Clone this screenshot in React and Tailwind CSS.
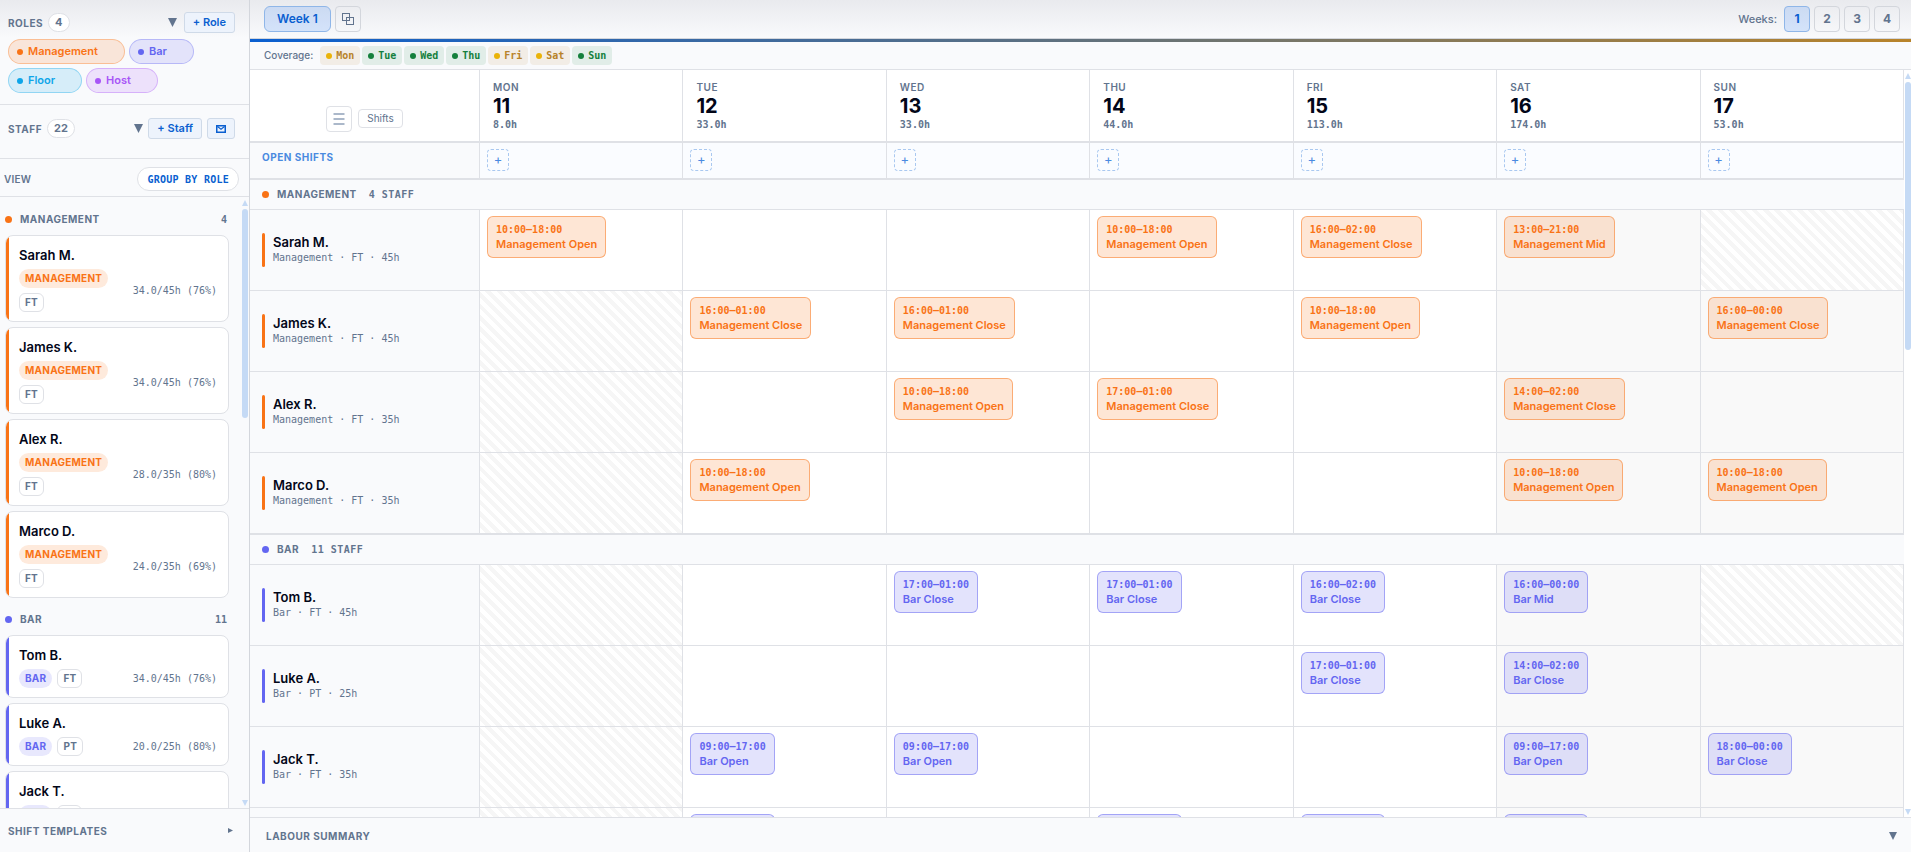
import React from 'react';
import clsx from 'clsx';

const TONES = {
  management: {
    dot: 'bg-[#f97316]',
    text: 'text-[#f97316]',
    chip: 'bg-[#f97316]/15 border-[#f97316]/35',
    badge: 'bg-[#f97316]/15',
    shift: 'bg-[#f97316]/18 border-[#f97316]/50',
  },
  bar: {
    dot: 'bg-[#6366f1]',
    text: 'text-[#6366f1]',
    chip: 'bg-[#6366f1]/15 border-[#6366f1]/35',
    badge: 'bg-[#6366f1]/15',
    shift: 'bg-[#6366f1]/18 border-[#6366f1]/50',
  },
  floor: {
    dot: 'bg-[#0ea5e9]',
    text: 'text-[#0ea5e9]',
    chip: 'bg-[#0ea5e9]/15 border-[#0ea5e9]/35',
  },
  host: {
    dot: 'bg-[#a855f7]',
    text: 'text-[#a855f7]',
    chip: 'bg-[#a855f7]/15 border-[#a855f7]/35',
  },
};

const ROLES = [
  { id: 'management', label: 'Management' },
  { id: 'bar', label: 'Bar' },
  { id: 'floor', label: 'Floor' },
  { id: 'host', label: 'Host' },
];

const DAYS = [
  { key: 'Mon', date: 11, hours: '8.0h', coverage: 'low' },
  { key: 'Tue', date: 12, hours: '33.0h', coverage: 'ok' },
  { key: 'Wed', date: 13, hours: '33.0h', coverage: 'ok' },
  { key: 'Thu', date: 14, hours: '44.0h', coverage: 'ok' },
  { key: 'Fri', date: 15, hours: '113.0h', coverage: 'low' },
  { key: 'Sat', date: 16, hours: '174.0h', coverage: 'low', weekend: true },
  { key: 'Sun', date: 17, hours: '53.0h', coverage: 'ok', weekend: true },
];

const GROUPS = [
  {
    role: 'management',
    label: 'Management',
    count: 4,
    staff: [
      {
        name: 'Sarah M.', type: 'FT', contract: 45, used: '34.0/45h (76%)', off: ['Sun'],
        shifts: {
          Mon: ['10:00–18:00', 'Management Open'],
          Thu: ['10:00–18:00', 'Management Open'],
          Fri: ['16:00–02:00', 'Management Close'],
          Sat: ['13:00–21:00', 'Management Mid'],
        },
      },
      {
        name: 'James K.', type: 'FT', contract: 45, used: '34.0/45h (76%)', off: ['Mon'],
        shifts: {
          Tue: ['16:00–01:00', 'Management Close'],
          Wed: ['16:00–01:00', 'Management Close'],
          Fri: ['10:00–18:00', 'Management Open'],
          Sun: ['16:00–00:00', 'Management Close'],
        },
      },
      {
        name: 'Alex R.', type: 'FT', contract: 35, used: '28.0/35h (80%)', off: ['Mon'],
        shifts: {
          Wed: ['10:00–18:00', 'Management Open'],
          Thu: ['17:00–01:00', 'Management Close'],
          Sat: ['14:00–02:00', 'Management Close'],
        },
      },
      {
        name: 'Marco D.', type: 'FT', contract: 35, used: '24.0/35h (69%)', off: ['Mon'],
        shifts: {
          Tue: ['10:00–18:00', 'Management Open'],
          Sat: ['10:00–18:00', 'Management Open'],
          Sun: ['10:00–18:00', 'Management Open'],
        },
      },
    ],
  },
  {
    role: 'bar',
    label: 'Bar',
    count: 11,
    staff: [
      {
        name: 'Tom B.', type: 'FT', contract: 45, used: '34.0/45h (76%)', off: ['Mon', 'Sun'],
        shifts: {
          Wed: ['17:00–01:00', 'Bar Close'],
          Thu: ['17:00–01:00', 'Bar Close'],
          Fri: ['16:00–02:00', 'Bar Close'],
          Sat: ['16:00–00:00', 'Bar Mid'],
        },
      },
      {
        name: 'Luke A.', type: 'PT', contract: 25, used: '20.0/25h (80%)', off: ['Mon'],
        shifts: {
          Fri: ['17:00–01:00', 'Bar Close'],
          Sat: ['14:00–02:00', 'Bar Close'],
        },
      },
      {
        name: 'Jack T.', type: 'FT', contract: 35, used: '32.0/35h (91%)', off: ['Mon'],
        shifts: {
          Tue: ['09:00–17:00', 'Bar Open'],
          Wed: ['09:00–17:00', 'Bar Open'],
          Sat: ['09:00–17:00', 'Bar Open'],
          Sun: ['18:00–00:00', 'Bar Close'],
        },
      },
      {
        name: 'Ryan P.', type: 'FT', contract: 35, used: '32.0/35h (91%)', off: ['Mon'],
        shifts: {
          Tue: ['17:00–01:00', 'Bar Close'],
          Thu: ['09:00–17:00', 'Bar Open'],
          Fri: ['09:00–17:00', 'Bar Open'],
          Sat: ['17:00–01:00', 'Bar Close'],
        },
      },
    ],
  },
];

const MONO = "font-['DejaVu_Sans_Mono',monospace]";
const LABEL = 'text-[10px] leading-4 font-bold uppercase tracking-wider text-slate-500';
const GRID = 'grid grid-cols-[230px_repeat(7,minmax(0,1fr))]';
const LINE = 'border-[#dfe1e6]';
const HATCH =
  'bg-[repeating-linear-gradient(45deg,transparent_0px,transparent_4px,rgba(0,0,0,0.035)_4px,rgba(0,0,0,0.035)_8px)]';

function Triangle({ className, dir = 'down' }) {
  const points = { down: '0,0 10,0 5,10', up: '0,10 10,10 5,0', right: '0,0 10,5 0,10' }[dir];
  return (
    <svg viewBox="0 0 10 10" className={className} fill="currentColor" aria-hidden="true">
      <polygon points={points} />
    </svg>
  );
}

function Count({ children }) {
  return (
    <span className="rounded-full border border-[#dfe1e6] bg-white px-[6px] text-[11px] leading-[17px] font-bold text-slate-500">
      {children}
    </span>
  );
}

function SmallButton({ children, ...props }) {
  return (
    <button
      type="button"
      className="flex h-[21px] items-center rounded-[3px] border border-[#cfdae8] bg-[#edf3fc] px-2 text-[11px] font-semibold text-[#0a5fd0]"
      {...props}
    >
      {children}
    </button>
  );
}

function Scrollbar({ className, thumb }) {
  return (
    <div className={clsx('flex shrink-0 flex-col items-center text-[#c5daf5]', className)} aria-hidden="true">
      <Triangle dir="up" className="my-[3px] size-[6px]" />
      <div className={clsx('w-[6px] rounded-full bg-[#c5daf5]', thumb)} />
      <Triangle dir="down" className="mt-auto mb-[2px] size-[6px]" />
    </div>
  );
}

function StaffCard({ person, group }) {
  const tone = TONES[group.role];
  return (
    <li className="flex overflow-hidden rounded-lg border border-[#dfe1e6] bg-white">
      <span className={clsx('w-[3px] shrink-0', tone.dot)} />
      <div className="flex-1 pt-[10px] pr-[11px] pb-[9px] pl-[10px]">
        <p className="text-[13px] leading-[18px] font-semibold text-slate-950">{person.name}</p>
        <div className="mt-[5px] flex items-center justify-between gap-2">
          <div className="flex flex-wrap gap-[5px]">
            <span className={clsx('rounded-full px-[6px] text-[10px] leading-[19px] font-bold uppercase tracking-wide', tone.badge, tone.text)}>
              {group.label}
            </span>
            <span className="rounded-md border border-[#dfe1e6] bg-white px-[5px] text-[10px] leading-[17px] font-bold tracking-wide text-slate-500">
              {person.type}
            </span>
          </div>
          <span className={clsx('shrink-0 text-[10px] text-slate-500', MONO)}>{person.used}</span>
        </div>
      </div>
    </li>
  );
}

function Sidebar() {
  return (
    <aside className="flex w-[250px] shrink-0 flex-col border-r border-[#d3d6dc]">
      <section className="border-b border-[#dfe1e6] px-2 pt-3 pb-[11px]">
        <div className="flex items-center gap-[5px] pr-[6px]">
          <h2 className={LABEL}>Roles</h2>
          <Count>4</Count>
          <Triangle className="mr-[2px] ml-auto size-[9px] text-slate-500" />
          <SmallButton>+ Role</SmallButton>
        </div>
        <ul className="mt-[6px] flex flex-wrap gap-1">
          {ROLES.map((role) => (
            <li
              key={role.id}
              className={clsx('flex h-[25px] items-center gap-[5px] rounded-full border pr-[26px] pl-2 text-[11px] font-semibold', TONES[role.id].chip, TONES[role.id].text)}
            >
              <span className={clsx('size-[6px] rounded-full', TONES[role.id].dot)} />
              {role.label}
            </li>
          ))}
        </ul>
      </section>

      <section className="flex items-center gap-[5px] border-b border-[#dfe1e6] pt-[13px] pr-[14px] pb-[19px] pl-2">
        <h2 className={LABEL}>Staff</h2>
        <Count>22</Count>
        <Triangle className="ml-auto size-[9px] text-slate-500" />
        <SmallButton>+ Staff</SmallButton>
        <SmallButton aria-label="Email staff">
          <svg viewBox="0 0 10 8" className="h-2 w-[10px]" fill="none" stroke="currentColor" strokeWidth="1.5">
            <rect x="0.75" y="0.75" width="8.5" height="6.5" />
            <path d="M1.5 1.5l3.5 2.8l3.5-2.8" strokeWidth="1.1" />
          </svg>
        </SmallButton>
      </section>

      <div className="flex items-center justify-between border-b border-[#dfe1e6] pt-2 pr-[10px] pb-[5px] pl-1">
        <span className="text-[10px] font-semibold tracking-wide text-slate-500 uppercase">View</span>
        <button
          type="button"
          className={clsx('h-6 rounded-full border border-[#dfe1e6] bg-white px-[9px] text-[10px] font-bold tracking-wide text-[#0a5fd0] uppercase', MONO)}
        >
          Group by role
        </button>
      </div>

      <div className="flex min-h-0 flex-1">
        <div className="flex-1 overflow-hidden pt-[6px] pl-[5px]">
          {GROUPS.map((group) => (
            <section key={group.role} className="pb-[5px]">
              <div className="flex h-8 items-center gap-2 pr-[2px]">
                <span className={clsx('size-[7px] rounded-full', TONES[group.role].dot)} />
                <h3 className={LABEL}>{group.label}</h3>
                <span className={clsx('ml-auto text-[10px] font-bold text-slate-500', MONO)}>{group.count}</span>
              </div>
              <ul className="flex flex-col gap-[5px]">
                {group.staff.map((person) => (
                  <StaffCard key={person.name} person={person} group={group} />
                ))}
              </ul>
            </section>
          ))}
        </div>
        <Scrollbar className="ml-3 w-2" thumb="h-[209px]" />
      </div>

      <button type="button" className="flex h-11 shrink-0 items-center justify-between border-t border-[#dfe1e6] px-2">
        <span className={LABEL}>Shift templates</span>
        <Triangle dir="right" className="mr-2 size-[5px] text-slate-500" />
      </button>
    </aside>
  );
}

function TopBar() {
  return (
    <header className="flex h-[39px] shrink-0 items-center gap-1 border-b border-[#d3d6dc] pr-[11px] pl-[14px]">
      <button type="button" className="h-[26px] rounded-md border border-[#8fb6e8] bg-[#0a6cff]/14 px-3 text-xs font-semibold text-[#0a5fd0]">
        Week 1
      </button>
      <button type="button" aria-label="Duplicate week" className="flex size-[26px] items-center justify-center rounded border border-[#d3d6dc] text-slate-500">
        <svg viewBox="0 0 12 12" className="size-3" fill="none" stroke="currentColor">
          <rect x="0.5" y="0.5" width="7" height="7" />
          <rect x="4.5" y="4.5" width="7" height="7" />
        </svg>
      </button>
      <span className="mr-[3px] ml-auto text-[11px] font-medium text-slate-500">Weeks:</span>
      {[1, 2, 3, 4].map((n) => (
        <button
          key={n}
          type="button"
          className={clsx(
            'size-[26px] rounded border text-xs font-bold',
            n === 1 ? 'border-[#8fb6e8] bg-[#0a6cff]/14 text-[#0a5fd0]' : 'border-[#d3d6dc] text-slate-500'
          )}
        >
          {n}
        </button>
      ))}
    </header>
  );
}

function Coverage() {
  return (
    <div className="flex h-7 shrink-0 items-center gap-[2px] border-b border-[#dfe1e6] pl-[14px]">
      <span className="mr-[5px] text-[10px] font-medium text-slate-500">Coverage:</span>
      {DAYS.map((day) => (
        <span
          key={day.key}
          className={clsx(
            'flex h-[19px] w-10 items-center justify-center gap-1 rounded text-[10px] font-bold',
            MONO,
            day.coverage === 'ok' ? 'bg-[#15803d]/10 text-[#15803d]' : 'bg-[#b8832a]/10 text-[#b8832a]'
          )}
        >
          <span className={clsx('size-[6px] shrink-0 rounded-full', day.coverage === 'ok' ? 'bg-[#15803d]' : 'bg-[#eab308]')} />
          {day.key}
        </span>
      ))}
    </div>
  );
}

function GridHead() {
  return (
    <>
      <div className={clsx(GRID, 'h-[73px] border-b-2 bg-white', LINE)}>
        <div className={clsx('flex items-center justify-center gap-[6px] border-r pt-[26px]', LINE)}>
          <button type="button" aria-label="List view" className="flex size-[26px] items-center justify-center rounded border border-[#dfe1e6] text-slate-400">
            <svg viewBox="0 0 12 12" className="size-3" stroke="currentColor" strokeWidth="1.6">
              <path d="M0.5 1h11M0.5 6h11M0.5 11h11" />
            </svg>
          </button>
          <button type="button" className="h-[19px] rounded border border-[#dfe1e6] px-2 text-[10px] text-slate-500">
            Shifts
          </button>
        </div>
        {DAYS.map((day) => (
          <div key={day.key} className={clsx('border-r px-[13px] pt-[9px]', LINE)}>
            <p className="text-[10px] leading-4 font-semibold tracking-wider text-slate-500 uppercase">{day.key}</p>
            <p className="text-xl leading-[22px] font-bold text-slate-950">{day.date}</p>
            <p className={clsx('text-[10px] leading-4 font-bold text-slate-500', MONO)}>{day.hours}</p>
          </div>
        ))}
      </div>
      <div className={clsx(GRID, 'h-9 border-b bg-[#fafcff]', LINE)}>
        <div className={clsx('border-r bg-[#f9fafc] pt-[6px] pl-3 text-[10px] leading-4 font-bold tracking-wider text-[#4a8ae0]', LINE)}>OPEN SHIFTS</div>
        {DAYS.map((day) => (
          <div key={day.key} className={clsx('border-r px-[7px] py-[6px]', LINE)}>
            <button
              type="button"
              aria-label={`Add open shift on ${day.key}`}
              className="flex size-[22px] items-center justify-center rounded border border-dashed border-[#a9c8f0] text-[13px] text-[#4a8ae0]"
            >
              +
            </button>
          </div>
        ))}
      </div>
    </>
  );
}

function StaffRow({ person, group }) {
  const tone = TONES[group.role];
  return (
    <div className={clsx(GRID, 'h-[81px] border-b bg-white', LINE)}>
      <div className={clsx('flex items-center gap-2 border-r bg-[#f9fafc] pl-3', LINE)}>
        <span className={clsx('h-[34px] w-[3px] rounded-full', tone.dot)} />
        <div>
          <p className="text-[13px] leading-4 font-semibold text-slate-950">{person.name}</p>
          <p className={clsx('text-[10px] leading-4 text-slate-500', MONO)}>
            {group.label} · {person.type} · {person.contract}h
          </p>
        </div>
      </div>
      {DAYS.map((day) => {
        const off = person.off.includes(day.key);
        const shift = person.shifts[day.key];
        return (
          <div key={day.key} className={clsx('flex items-start border-r px-[7px] py-[6px]', LINE, off ? HATCH : day.weekend && 'bg-[#f9f9f9]')}>
            {shift && (
              <button type="button" className={clsx('h-[42px] rounded-md border px-2 text-left', tone.shift, tone.text)}>
                <span className={clsx('block text-[10px] leading-[15px] font-bold', MONO)}>{shift[0]}</span>
                <span className="block text-[11px] leading-[15px] font-semibold">{shift[1]}</span>
              </button>
            )}
          </div>
        );
      })}
    </div>
  );
}

export default function App() {
  return (
    <div className="flex h-screen overflow-hidden bg-[#f9fafc] bg-[linear-gradient(to_bottom,#e9eaee,#f9fafc_38px)] font-['Inter',sans-serif]">
      <Sidebar />
      <main className="flex min-w-0 flex-1 flex-col">
        <TopBar />
        <div className="h-[3px] shrink-0 bg-[linear-gradient(to_right,#0a5fd0,#b8832a)]" />
        <Coverage />
        <div className="flex min-h-0 flex-1">
          <div className="flex-1 overflow-hidden">
            <GridHead />
            {GROUPS.map((group) => (
              <section key={group.role}>
                <div className={clsx('flex h-[31px] items-center border-y bg-[#f9fafc] pl-3', LINE)}>
                  <span className={clsx('mr-2 size-[7px] rounded-full', TONES[group.role].dot)} />
                  <h3 className={LABEL}>
                    {group.label}
                    <span className={clsx('ml-3', MONO)}>{group.count} staff</span>
                  </h3>
                </div>
                {group.staff.map((person) => (
                  <StaffRow key={person.name} person={person} group={group} />
                ))}
              </section>
            ))}
          </div>
          <Scrollbar className="w-[7px] bg-white" thumb="h-[268px]" />
        </div>
        <button type="button" className={clsx('flex h-[35px] shrink-0 items-center justify-between border-t pt-[2px] pr-[14px] pl-4', LINE)}>
          <span className={LABEL}>Labour summary</span>
          <Triangle className="size-2 text-slate-500" />
        </button>
      </main>
    </div>
  );
}
